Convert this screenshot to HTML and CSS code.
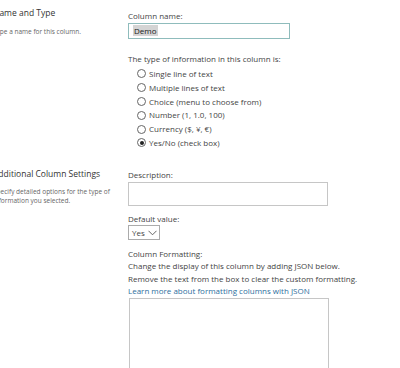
FILE: index.html
```html
<!DOCTYPE html>
<html lang="en">
<head>
    <meta charset="UTF-8">
    <title>Column settings</title>
    <link rel="stylesheet" href="styles.css">
</head>
<body>
    <div class="page">
        <!-- Name and Type -->
        <div class="section first">
            <div class="side">
                <h3>Name and Type</h3>
                <p>Type a name for this column.</p>
            </div>
            <div class="main">
                <label class="label">Column name:</label>
                <div class="textbox"><span class="selected">Demo</span></div>

                <div class="label type-label">The type of information in this column is:</div>
                <ul class="choices">
                    <li><span class="radio"></span>Single line of text</li>
                    <li><span class="radio"></span>Multiple lines of text</li>
                    <li><span class="radio"></span>Choice (menu to choose from)</li>
                    <li><span class="radio"></span>Number (1, 1.0, 100)</li>
                    <li><span class="radio"></span>Currency ($, ¥, €)</li>
                    <li><span class="radio checked"></span>Yes/No (check box)</li>
                </ul>
            </div>
        </div>

        <!-- Additional Column Settings -->
        <div class="section second">
            <div class="side">
                <h3>Additional Column Settings</h3>
                <p>Specify detailed options for the type of information you selected.</p>
            </div>
            <div class="main">
                <label class="label">Description:</label>
                <div class="area small"></div>

                <label class="label default-label">Default value:</label>
                <div class="dropdown">Yes
                    <svg width="9" height="6" viewBox="0 0 9 6"><path d="M0.5 0.8 L4.5 4.8 L8.5 0.8" fill="none" stroke="#555" stroke-width="0.9"/></svg>
                </div>

                <div class="label format-label">Column Formatting:</div>
                <div class="help">Change the display of this column by adding JSON below.</div>
                <div class="help">Remove the text from the box to clear the custom formatting.</div>
                <a class="help link" href="#">Learn more about formatting columns with JSON</a>
                <div class="area big"></div>
            </div>
        </div>
    </div>
</body>
</html>
```
FILE: styles.css
```css
/* Basic styling */
body {
    margin: 0;
    background: #ffffff;
    font-family: "Open Sans", "Noto Sans", sans-serif;
    color: #444;
    overflow: hidden;
}
.page {
    margin-left: -7px;
}
.section {
    display: flex;
}
.section.first {
    padding-top: 6px;
    height: 159px;
}
.second .side {
    padding-top: 2px;
}
.side {
    width: 135px;
    flex-shrink: 0;
}
.side h3 {
    margin: 0;
    font-size: 8.5px;
    font-weight: normal;
    color: #333;
    line-height: 14px;
}
.side p {
    margin: 7px 0 0;
    font-size: 6.5px;
    line-height: 9px;
    color: #666;
    width: 118px;
}
.second .side p {
    margin-top: 6px;
}
.main {
    width: 270px;
    display: flex;
    flex-direction: column;
    align-items: flex-start;
}
.label {
    font-size: 8px;
    line-height: 13px;
    color: #444;
    margin-top: 4px;
}
.first .label:first-child {
    margin-top: 3px;
}
.second .label:first-child {
    margin-top: 3px;
}
.textbox {
    box-sizing: border-box;
    width: 162px;
    height: 16px;
    border: 1px solid #8fbcbc;
    margin-top: 1px;
    padding: 1px 0 0 4px;
    font-size: 8px;
    line-height: 12px;
    color: #222;
}
.selected {
    background: #d4d4d4;
    padding: 0 1px;
}
.type-label {
    margin-top: 13px;
}
.choices {
    list-style: none;
    margin: 2px 0 0 9px;
    padding: 0;
}
.choices li {
    display: flex;
    align-items: center;
    font-size: 8px;
    line-height: 13.8px;
    color: #444;
}
.radio {
    box-sizing: border-box;
    width: 9px;
    height: 9px;
    border: 1px solid #666;
    border-radius: 50%;
    margin-right: 3px;
    display: flex;
    align-items: center;
    justify-content: center;
}
.radio.checked::after {
    content: "";
    width: 4px;
    height: 4px;
    border-radius: 50%;
    background: #222;
}
.area {
    box-sizing: border-box;
    width: 200px;
    border: 1px solid #c6c6c6;
    margin-top: 0;
}
.area.small {
    height: 24px;
    margin-top: 1px;
}
.area.big {
    height: 100px;
    margin-left: 1px;
    margin-top: 0;
}
.default-label {
    margin-top: 6px;
}
.dropdown {
    box-sizing: border-box;
    height: 15px;
    border: 1px solid #ababab;
    margin-top: 0;
    padding: 0 2px 0 3px;
    font-size: 8px;
    line-height: 13px;
    color: #444;
    display: flex;
    align-items: center;
    gap: 3px;
}
.format-label {
    margin-top: 7px;
}
.help {
    font-size: 8px;
    line-height: 12.6px;
    color: #444;
}
.link {
    color: #2e6f9e;
    text-decoration: none;
}
```
